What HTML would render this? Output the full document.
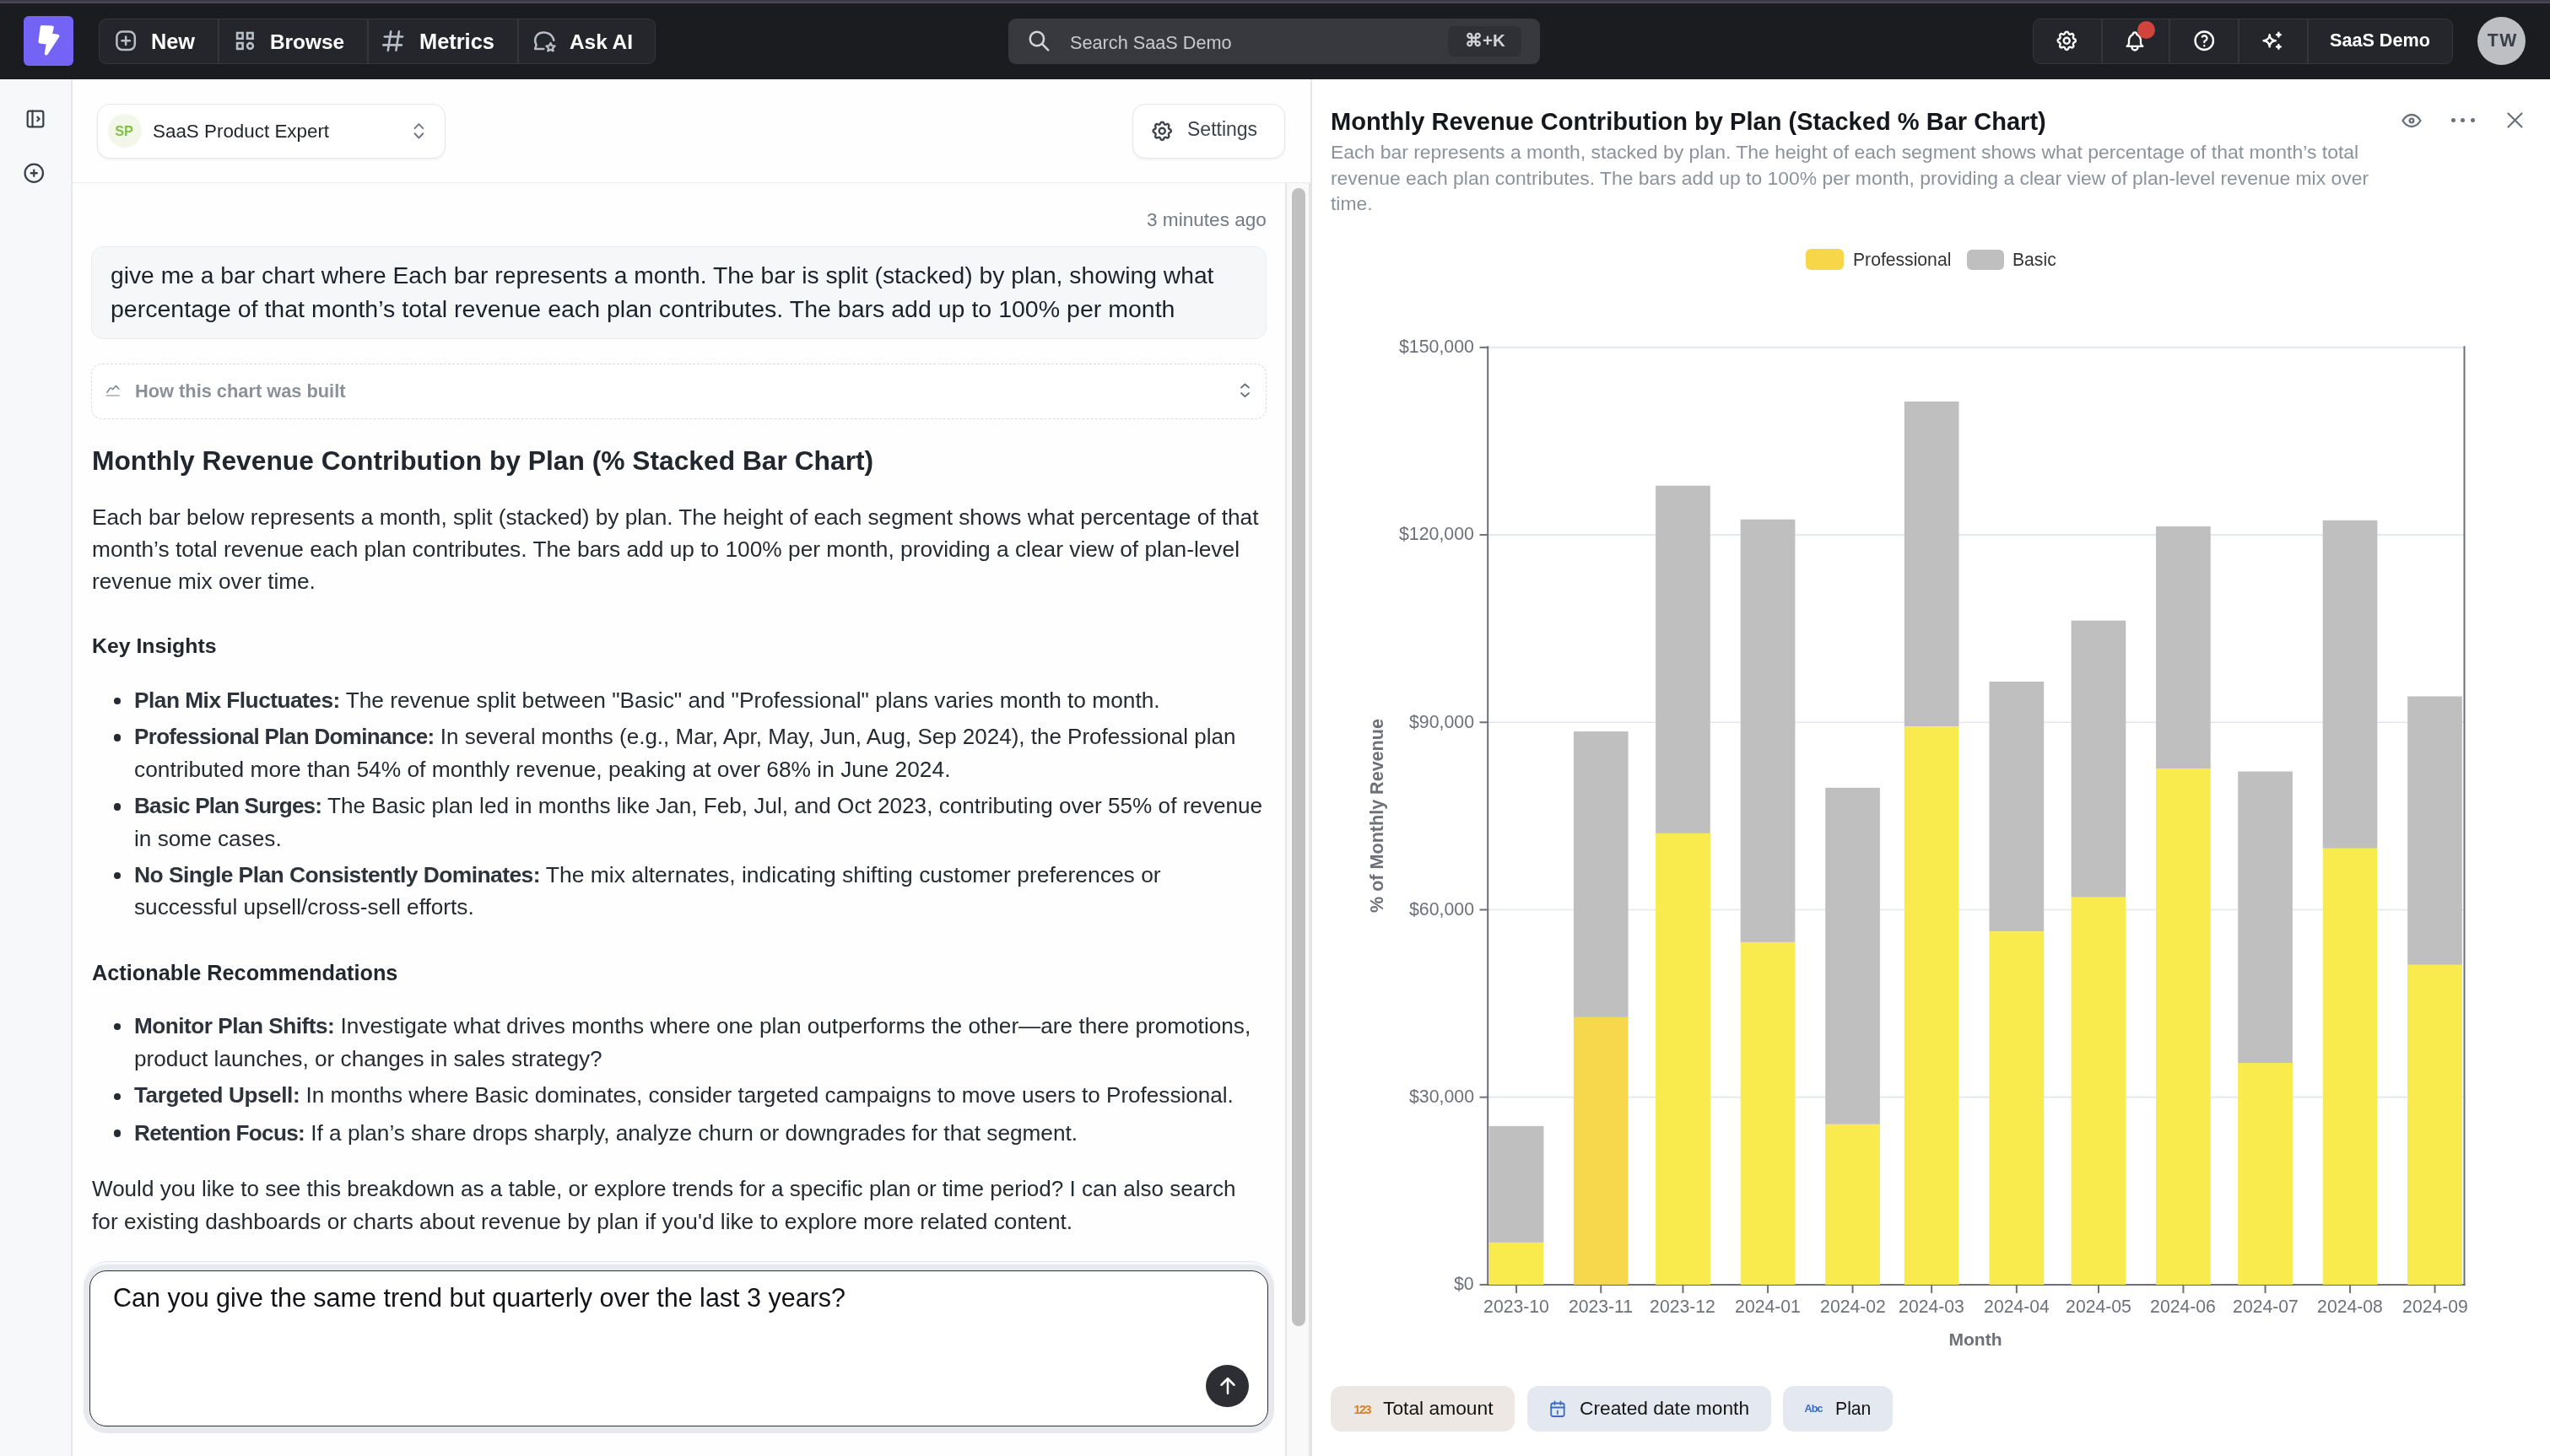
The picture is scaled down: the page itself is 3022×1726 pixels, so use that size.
<!DOCTYPE html>
<html><head><meta charset="utf-8"><title>SaaS Demo</title>
<style>
html,body{margin:0;padding:0;}
body{width:3022px;height:1726px;position:relative;overflow:hidden;background:#fff;font-family:"Liberation Sans",sans-serif;}
.t{position:absolute;white-space:nowrap;will-change:transform;}
b{font-weight:700;letter-spacing:-0.6px;color:#2e323a;}
</style></head><body>
<div style="position:absolute;left:0px;top:0px;width:3022px;height:2px;background:#3d384b"></div>
<div style="position:absolute;left:0px;top:2px;width:3022px;height:2px;background:#4a484f"></div>
<div style="position:absolute;left:0px;top:4px;width:3022px;height:90px;background:#1b1c1f"></div>
<div style="position:absolute;left:28px;top:19px;width:59px;height:59px;background:#7364f5;border-radius:6px"></div>
<svg style="position:absolute;left:28px;top:19px;" width="59" height="59" viewBox="28 19 59 59" fill="none" stroke-linecap="round" stroke-linejoin="round"><path d="M49.7 32 L61.8 32.4 L59.7 41.6 L68.4 42.7 L54.8 63.5 L57 50.7 L47.5 49.4 Z" fill="#fff" stroke="#fff" stroke-width="4"/></svg>
<div style="position:absolute;left:117px;top:22px;width:660px;height:54px;background:#25262b;border:1.5px solid #35363b;border-radius:9px;box-sizing:border-box"></div>
<div style="position:absolute;left:257.5px;top:23px;width:2.0px;height:52px;background:#35363b"></div>
<div style="position:absolute;left:434.5px;top:23px;width:2.0px;height:52px;background:#35363b"></div>
<div style="position:absolute;left:612.5px;top:23px;width:2.0px;height:52px;background:#35363b"></div>
<svg style="position:absolute;left:130px;top:30px;" width="40" height="36" viewBox="130 30 40 36" fill="none" stroke-linecap="round" stroke-linejoin="round"><rect x="138.4" y="37.5" width="21.4" height="21.4" rx="6.5" stroke="#b8bdc6" stroke-width="2.5"/><path d="M144.4 48.2 H153.9 M149.15 43.5 V53" stroke="#b8bdc6" stroke-width="2.5"/></svg>
<div class="t " style="left:179.00px;top:33.08px;font-size:25.3px;line-height:32.89px;color:#fff;font-weight:700;">New</div>
<svg style="position:absolute;left:272px;top:30px;" width="38" height="36" viewBox="272 30 38 36" fill="none" stroke-linecap="round" stroke-linejoin="round"><rect x="281.1" y="39" width="6.5" height="6.8" stroke="#b8bdc6" stroke-width="2.6" stroke-linejoin="miter"/><rect x="293.1" y="39" width="6.5" height="6.8" stroke="#b8bdc6" stroke-width="2.6" stroke-linejoin="miter"/><rect x="281.1" y="51.1" width="6.5" height="6.8" stroke="#b8bdc6" stroke-width="2.6" stroke-linejoin="miter"/><circle cx="296.5" cy="54.5" r="3.4" stroke="#b8bdc6" stroke-width="2.6"/></svg>
<div class="t " style="left:320.00px;top:33.98px;font-size:24.4px;line-height:31.72px;color:#fff;font-weight:700;">Browse</div>
<svg style="position:absolute;left:448px;top:30px;" width="37" height="36" viewBox="448 30 37 36" fill="none" stroke-linecap="round" stroke-linejoin="round"><path d="M455.8 43.5 H477.1 M454.3 53.4 H475.9 M463.2 37.2 L459.8 59.9 M472.9 37.2 L469.4 59.7" stroke="#b8bdc6" stroke-width="2.6"/></svg>
<div class="t " style="left:497.00px;top:32.98px;font-size:25.4px;line-height:33.02px;color:#fff;font-weight:700;">Metrics</div>
<svg style="position:absolute;left:626px;top:30px;" width="40" height="38" viewBox="626 30 40 38" fill="none" stroke-linecap="round" stroke-linejoin="round"><path d="M644.3 57.9 H634.2 L635.6 53.2 C632.3 47 635 40.3 641.6 38.8 C647.6 37.4 654.4 40.3 656.3 47.8" stroke="#b8bdc6" stroke-width="2.5"/><path d="M652.5 50.9 L654.1 54.2 L657.6 54.6 L655 57 L655.7 60.5 L652.5 58.7 L649.3 60.5 L650 57 L647.4 54.6 L650.9 54.2 Z" stroke="#b8bdc6" stroke-width="2.2"/></svg>
<div class="t " style="left:675.00px;top:33.98px;font-size:24.4px;line-height:31.72px;color:#fff;font-weight:700;">Ask AI</div>
<div style="position:absolute;left:1195px;top:22px;width:630px;height:54px;background:#38393e;border-radius:9px"></div>
<svg style="position:absolute;left:1210px;top:30px;" width="42" height="38" viewBox="1210 30 42 38" fill="none" stroke-linecap="round" stroke-linejoin="round"><circle cx="1228.9" cy="46" r="8.2" stroke="#d4d5d8" stroke-width="2.5"/><path d="M1235.3 52.3 L1242.2 59.3" stroke="#d4d5d8" stroke-width="2.5"/></svg>
<div class="t " style="left:1268.00px;top:36.77px;font-size:21.7px;line-height:28.21px;color:#c9cacd;font-weight:400;">Search SaaS Demo</div>
<div style="position:absolute;left:1716px;top:31px;width:87px;height:35.5px;background:#2f3035;border-radius:7px"></div>
<div class="t " style="left:759.80px;width:2000px;text-align:center;top:34.57px;font-size:20.5px;line-height:26.65px;color:#d2d3d6;font-weight:700;">&#8984;+K</div>
<div style="position:absolute;left:2409px;top:22px;width:498px;height:54px;background:#25262b;border:1.5px solid #35363b;border-radius:9px;box-sizing:border-box"></div>
<div style="position:absolute;left:2489.5px;top:23px;width:2.0px;height:52px;background:#35363b"></div>
<div style="position:absolute;left:2569.8px;top:23px;width:2.0px;height:52px;background:#35363b"></div>
<div style="position:absolute;left:2652px;top:23px;width:2px;height:52px;background:#35363b"></div>
<div style="position:absolute;left:2733.5px;top:23px;width:2.0px;height:52px;background:#35363b"></div>
<svg style="position:absolute;left:2434.85px;top:33.75px;" width="28.5" height="28.5" viewBox="0 0 24 24" fill="none" stroke="#ffffff" stroke-width="2" stroke-linecap="round" stroke-linejoin="round"><path d="M10.325 4.317c.426 -1.756 2.924 -1.756 3.35 0a1.724 1.724 0 0 0 2.573 1.066c1.543 -.94 3.31 .826 2.37 2.37a1.724 1.724 0 0 0 1.065 2.572c1.756 .426 1.756 2.924 0 3.35a1.724 1.724 0 0 0 -1.066 2.573c.94 1.543 -.826 3.31 -2.37 2.37a1.724 1.724 0 0 0 -2.572 1.065c-.426 1.756 -2.924 1.756 -3.35 0a1.724 1.724 0 0 0 -2.573 -1.066c-1.543 .94 -3.31 -.826 -2.37 -2.37a1.724 1.724 0 0 0 -1.065 -2.572c-1.756 -.426 -1.756 -2.924 0 -3.35a1.724 1.724 0 0 0 1.066 -2.573c-.94 -1.543 .826 -3.31 2.37 -2.37c1 .608 2.296 .07 2.572 -1.065z"/><path d="M9 12a3 3 0 1 0 6 0a3 3 0 0 0 -6 0"/></svg>
<svg style="position:absolute;left:2516.40px;top:34.50px;" width="28" height="28" viewBox="0 0 24 24" fill="none" stroke="#ffffff" stroke-width="2" stroke-linecap="round" stroke-linejoin="round"><path d="M10 5a2 2 0 1 1 4 0a7 7 0 0 1 4 6v3a4 4 0 0 0 2 3h-16a4 4 0 0 0 2 -3v-3a7 7 0 0 1 4 -6"/><path d="M9 17v1a3 3 0 0 0 6 0v-1"/></svg>
<div style="position:absolute;left:2532.7px;top:24.9px;width:21.2px;height:21.2px;border-radius:50%;background:#d0443d"></div>
<svg style="position:absolute;left:2598.05px;top:33.95px;" width="28.5" height="28.5" viewBox="0 0 24 24" fill="none" stroke="#ffffff" stroke-width="2" stroke-linecap="round" stroke-linejoin="round"><path d="M3 12a9 9 0 1 0 18 0a9 9 0 1 0 -18 0"/><path d="M12 17v.01"/><path d="M12 13.5a1.5 1.5 0 0 1 1 -1.5a2.6 2.6 0 1 0 -3 -4"/></svg>
<svg style="position:absolute;left:2679.05px;top:33.95px;" width="28.5" height="28.5" viewBox="0 0 24 24" fill="none" stroke="#ffffff" stroke-width="2" stroke-linecap="round" stroke-linejoin="round"><path d="M16 18a2 2 0 0 1 2 2a2 2 0 0 1 2 -2a2 2 0 0 1 -2 -2a2 2 0 0 1 -2 2zm0 -12a2 2 0 0 1 2 2a2 2 0 0 1 2 -2a2 2 0 0 1 -2 -2a2 2 0 0 1 -2 2zm-7 12a6 6 0 0 1 6 -6a6 6 0 0 1 -6 -6a6 6 0 0 1 -6 6a6 6 0 0 1 6 6z"/></svg>
<div class="t " style="left:2761.00px;top:34.47px;font-size:21.6px;line-height:28.08px;color:#fff;font-weight:700;">SaaS Demo</div>
<div style="position:absolute;left:2936.3px;top:19.9px;width:57px;height:57px;border-radius:50%;background:#bdbfc3"></div>
<div class="t " style="left:1965.20px;width:2000px;text-align:center;top:34.67px;font-size:21.3px;line-height:27.69px;color:#3a3e46;font-weight:700;letter-spacing:1.6px;text-indent:1.6px">TW</div>
<div style="position:absolute;left:0px;top:94px;width:84px;height:1632px;background:#f7f8fa"></div>
<div style="position:absolute;left:84px;top:94px;width:1.5px;height:1632px;background:#e6e8eb"></div>
<svg style="position:absolute;left:27.90px;top:126.50px;" width="28" height="28" viewBox="0 0 24 24" fill="none" stroke="#3b4048" stroke-width="1.9" stroke-linecap="round" stroke-linejoin="round"><path d="M4 4m0 2a2 2 0 0 1 2 -2h12a2 2 0 0 1 2 2v12a2 2 0 0 1 -2 2h-12a2 2 0 0 1 -2 -2z"/><path d="M9 4v16"/><path d="M14 10l2 2l-2 2"/></svg>
<svg style="position:absolute;left:25.95px;top:191.05px;" width="28.5" height="28.5" viewBox="0 0 24 24" fill="none" stroke="#3b4048" stroke-width="1.9" stroke-linecap="round" stroke-linejoin="round"><path d="M3 12a9 9 0 1 0 18 0a9 9 0 0 0 -18 0"/><path d="M9 12h6"/><path d="M12 9v6"/></svg>
<div style="position:absolute;left:85.5px;top:94px;width:1467.5px;height:1632px;background:#fefefe"></div>
<div style="position:absolute;left:85.5px;top:216px;width:1466.5px;height:1px;background:#e9ebee"></div>
<div style="position:absolute;left:115.3px;top:123.4px;width:412.8px;height:64.6px;background:#fff;border:1.5px solid #e4e6ea;border-radius:15px;box-sizing:border-box;box-shadow:0 2px 3px rgba(0,0,0,0.05)"></div>
<div style="position:absolute;left:128px;top:135px;width:40px;height:40px;border-radius:50%;background:#f2f7ea"></div>
<div class="t " style="left:-853.20px;width:2000px;text-align:center;top:145.05px;font-size:16.3px;line-height:21.19px;color:#7ec243;font-weight:700;">SP</div>
<div class="t " style="left:181.40px;top:140.77px;font-size:22.4px;line-height:29.12px;color:#1f2328;font-weight:400;">SaaS Product Expert</div>
<svg style="position:absolute;left:484px;top:140px;" width="24" height="30" viewBox="484 140 24 30" fill="none" stroke-linecap="round" stroke-linejoin="round"><path d="M491.5 152.1 L496.4 147.1 L501.3 152.1 M501.3 158.3 L496.4 163.5 L491.5 158.3" stroke="#737983" stroke-width="2"/></svg>
<div style="position:absolute;left:1341.5px;top:123.3px;width:181.70000000000005px;height:64.7px;background:#fff;border:1.5px solid #e4e6ea;border-radius:15px;box-sizing:border-box;box-shadow:0 2px 3px rgba(0,0,0,0.05)"></div>
<svg style="position:absolute;left:1363.25px;top:141.05px;" width="28.5" height="28.5" viewBox="0 0 24 24" fill="none" stroke="#3c4149" stroke-width="2" stroke-linecap="round" stroke-linejoin="round"><path d="M10.325 4.317c.426 -1.756 2.924 -1.756 3.35 0a1.724 1.724 0 0 0 2.573 1.066c1.543 -.94 3.31 .826 2.37 2.37a1.724 1.724 0 0 0 1.065 2.572c1.756 .426 1.756 2.924 0 3.35a1.724 1.724 0 0 0 -1.066 2.573c.94 1.543 -.826 3.31 -2.37 2.37a1.724 1.724 0 0 0 -2.572 1.065c-.426 1.756 -2.924 1.756 -3.35 0a1.724 1.724 0 0 0 -2.573 -1.066c-1.543 .94 -3.31 -.826 -2.37 -2.37a1.724 1.724 0 0 0 -1.065 -2.572c-1.756 -.426 -1.756 -2.924 0 -3.35a1.724 1.724 0 0 0 1.066 -2.573c-.94 -1.543 .826 -3.31 2.37 -2.37c1 .608 2.296 .07 2.572 -1.065z"/><path d="M9 12a3 3 0 1 0 6 0a3 3 0 0 0 -6 0"/></svg>
<div class="t " style="left:1407.00px;top:139.18px;font-size:23px;line-height:29.9px;color:#3d434b;font-weight:400;">Settings</div>
<div style="position:absolute;left:1523px;top:217px;width:2px;height:1509px;background:#e6e6e6"></div>
<div style="position:absolute;left:1525px;top:217px;width:26px;height:1509px;background:#f9f9f9"></div>
<div style="position:absolute;left:1531px;top:223px;width:16px;height:1349px;background:#c0c0c0;border-radius:8px"></div>
<div style="position:absolute;left:1551px;top:217px;width:4px;height:1509px;background:#e5e5e8"></div>
<div style="position:absolute;left:1553px;top:94px;width:2px;height:123px;background:#e4e5e9"></div>
<div class="t " style="right:1521.20px;top:246.47px;font-size:22.6px;line-height:29.38px;color:#737a84;font-weight:400;">3 minutes ago</div>
<div style="position:absolute;left:108px;top:291.7px;width:1393.4px;height:110.30000000000001px;background:#f6f7f9;border:1.5px solid #eaecef;border-radius:14px;box-sizing:border-box"></div>
<div class="t " style="left:131.20px;top:308.33px;font-size:28.26px;line-height:36.74px;color:#1d2129;font-weight:400;">give me a bar chart where Each bar represents a month. The bar is split (stacked) by plan, showing what</div>
<div class="t " style="left:131.20px;top:348.46px;font-size:28.54px;line-height:37.1px;color:#1d2129;font-weight:400;">percentage of that month&#8217;s total revenue each plan contributes. The bars add up to 100% per month</div>
<div style="position:absolute;left:108px;top:431px;width:1393.4px;height:66px;background:#fff;border:1.5px dashed #d8dbe0;border-radius:13px;box-sizing:border-box"></div>
<svg style="position:absolute;left:120px;top:450px;" width="28" height="26" viewBox="120 450 28 26" fill="none" stroke-linecap="round" stroke-linejoin="round"><path d="M126.8 465.2 L130.4 460.2 Q131.5 459.5 133.7 461.4 L137.5 457.3 L140.8 461.1" stroke="#80868f" stroke-width="1.5"/><path d="M126.5 468.9 H141.2" stroke="#b3b7be" stroke-width="1.8"/></svg>
<div class="t " style="left:159.60px;top:449.87px;font-size:21.8px;line-height:28.34px;color:#8b9099;font-weight:700;">How this chart was built</div>
<svg style="position:absolute;left:1464px;top:450px;" width="24" height="26" viewBox="1464 450 24 26" fill="none" stroke-linecap="round" stroke-linejoin="round"><path d="M1471 459.5 L1475.5 455.5 L1480 459.5 M1480 466 L1475.5 470 L1471 466" stroke="#6b717a" stroke-width="1.8"/></svg>
<div class="t " style="left:109.00px;top:526.26px;font-size:31.75px;line-height:41.27px;color:#22262d;font-weight:700;">Monthly Revenue Contribution by Plan (% Stacked Bar Chart)</div>
<div class="t " style="left:109.00px;top:596.09px;font-size:26.2px;line-height:34.06px;color:#262a31;font-weight:400;">Each bar below represents a month, split (stacked) by plan. The height of each segment shows what percentage of that</div>
<div class="t " style="left:109.00px;top:634.19px;font-size:26.3px;line-height:34.19px;color:#262a31;font-weight:400;">month&#8217;s total revenue each plan contributes. The bars add up to 100% per month, providing a clear view of plan-level</div>
<div class="t " style="left:109.00px;top:672.39px;font-size:26.2px;line-height:34.06px;color:#262a31;font-weight:400;">revenue mix over time.</div>
<div class="t " style="left:109.00px;top:750.28px;font-size:24.8px;line-height:32.24px;color:#22262d;font-weight:700;">Key Insights</div>
<div style="position:absolute;left:134.50px;top:826.80px;width:8.4px;height:8.4px;border-radius:50%;background:#262a31"></div>
<div class="t " style="left:159.00px;top:813.10px;font-size:26.29px;line-height:34.18px;color:#262a31;font-weight:400;"><b style="letter-spacing:-0.515px">Plan Mix Fluctuates:</b> The revenue split between "Basic" and "Professional" plans varies month to month.</div>
<div style="position:absolute;left:134.50px;top:870.20px;width:8.4px;height:8.4px;border-radius:50%;background:#262a31"></div>
<div class="t " style="left:159.00px;top:856.79px;font-size:25.99px;line-height:33.79px;color:#262a31;font-weight:400;"><b style="letter-spacing:-0.659px">Professional Plan Dominance:</b> In several months (e.g., Mar, Apr, May, Jun, Aug, Sep 2024), the Professional plan</div>
<div class="t " style="left:159.00px;top:894.66px;font-size:26.33px;line-height:34.23px;color:#262a31;font-weight:400;">contributed more than 54% of monthly revenue, peaking at over 68% in June 2024.</div>
<div style="position:absolute;left:134.50px;top:952.40px;width:8.4px;height:8.4px;border-radius:50%;background:#262a31"></div>
<div class="t " style="left:159.00px;top:938.86px;font-size:26.13px;line-height:33.97px;color:#262a31;font-weight:400;"><b style="letter-spacing:-0.802px">Basic Plan Surges:</b> The Basic plan led in months like Jan, Feb, Jul, and Oct 2023, contributing over 55% of revenue</div>
<div class="t " style="left:159.00px;top:976.89px;font-size:26.2px;line-height:34.06px;color:#262a31;font-weight:400;">in some cases.</div>
<div style="position:absolute;left:134.50px;top:1033.70px;width:8.4px;height:8.4px;border-radius:50%;background:#262a31"></div>
<div class="t " style="left:159.00px;top:1019.85px;font-size:26.44px;line-height:34.37px;color:#262a31;font-weight:400;"><b style="letter-spacing:-0.564px">No Single Plan Consistently Dominates:</b> The mix alternates, indicating shifting customer preferences or</div>
<div class="t " style="left:159.00px;top:1058.19px;font-size:26.2px;line-height:34.06px;color:#262a31;font-weight:400;">successful upsell/cross-sell efforts.</div>
<div class="t " style="left:109.00px;top:1136.79px;font-size:25.29px;line-height:32.88px;color:#22262d;font-weight:700;">Actionable Recommendations</div>
<div style="position:absolute;left:134.50px;top:1213.10px;width:8.4px;height:8.4px;border-radius:50%;background:#262a31"></div>
<div class="t " style="left:159.00px;top:1199.49px;font-size:26.19px;line-height:34.05px;color:#262a31;font-weight:400;"><b style="letter-spacing:-0.501px">Monitor Plan Shifts:</b> Investigate what drives months where one plan outperforms the other&#8212;are there promotions,</div>
<div class="t " style="left:159.00px;top:1237.59px;font-size:26.2px;line-height:34.06px;color:#262a31;font-weight:400;">product launches, or changes in sales strategy?</div>
<div style="position:absolute;left:134.50px;top:1295.70px;width:8.4px;height:8.4px;border-radius:50%;background:#262a31"></div>
<div class="t " style="left:159.00px;top:1282.19px;font-size:26.1px;line-height:33.93px;color:#262a31;font-weight:400;"><b style="letter-spacing:-0.395px">Targeted Upsell:</b> In months where Basic dominates, consider targeted campaigns to move users to Professional.</div>
<div style="position:absolute;left:134.50px;top:1339.20px;width:8.4px;height:8.4px;border-radius:50%;background:#262a31"></div>
<div class="t " style="left:159.00px;top:1325.59px;font-size:26.2px;line-height:34.06px;color:#262a31;font-weight:400;"><b style="letter-spacing:-0.746px">Retention Focus:</b> If a plan&#8217;s share drops sharply, analyze churn or downgrades for that segment.</div>
<div class="t " style="left:109.00px;top:1392.52px;font-size:26.07px;line-height:33.89px;color:#262a31;font-weight:400;">Would you like to see this breakdown as a table, or explore trends for a specific plan or time period? I can also search</div>
<div class="t " style="left:109.00px;top:1430.53px;font-size:26.26px;line-height:34.14px;color:#262a31;font-weight:400;">for existing dashboards or charts about revenue by plan if you'd like to explore more related content.</div>
<div style="position:absolute;left:99px;top:1495px;width:1410.5px;height:204px;background:#f8f9fe;border-top:1px solid #dfe6fb;box-sizing:border-box;border-radius:28px"></div>
<div style="position:absolute;left:99px;top:1499px;width:1410.5px;height:200px;background:#e8e9ec;border-radius:27px"></div>
<div style="position:absolute;left:106.2px;top:1506.2px;width:1396.8px;height:185.29999999999995px;background:#fff;border:1.5px solid #2c2f36;border-radius:20px;box-sizing:border-box"></div>
<div class="t " style="left:133.70px;top:1519.20px;font-size:30.5px;line-height:39.65px;color:#111318;font-weight:400;">Can you give the same trend but quarterly over the last 3 years?</div>
<div style="position:absolute;left:1429.4px;top:1617.5px;width:50.5px;height:50.5px;border-radius:50%;background:#2d2e33"></div>
<svg style="position:absolute;left:1439.70px;top:1627.80px;" width="30" height="30" viewBox="0 0 24 24" fill="none" stroke="#fff" stroke-width="2" stroke-linecap="round" stroke-linejoin="round"><path d="M12 5l0 14"/><path d="M18 11l-6 -6"/><path d="M6 11l6 -6"/></svg>
<div style="position:absolute;left:1555px;top:94px;width:1467px;height:1632px;background:#ffffff"></div>
<div class="t " style="left:1577.00px;top:126.03px;font-size:29.07px;line-height:37.79px;color:#15171c;font-weight:700;">Monthly Revenue Contribution by Plan (Stacked % Bar Chart)</div>
<div class="t " style="left:1577.00px;top:165.24px;font-size:22.95px;line-height:30px;color:#8c929b;font-weight:400;">Each bar represents a month, stacked by plan. The height of each segment shows what percentage of that month&#8217;s total</div>
<div class="t " style="left:1577.00px;top:195.56px;font-size:22.9px;line-height:30px;color:#8c929b;font-weight:400;">revenue each plan contributes. The bars add up to 100% per month, providing a clear view of plan-level revenue mix over</div>
<div class="t " style="left:1577.00px;top:225.56px;font-size:22.9px;line-height:30px;color:#8c929b;font-weight:400;">time.</div>
<svg style="position:absolute;left:2844.30px;top:128.80px;" width="28" height="28" viewBox="0 0 24 24" fill="none" stroke="#6b717a" stroke-width="2" stroke-linecap="round" stroke-linejoin="round"><path d="M10 12a2 2 0 1 0 4 0a2 2 0 0 0 -4 0"/><path d="M21 12c-2.4 4 -5.4 6 -9 6c-3.6 0 -6.6 -2 -9 -6c2.4 -4 5.4 -6 9 -6c3.6 0 6.6 2 9 6"/></svg>
<div style="position:absolute;left:2904.60px;top:140.20px;width:5.2px;height:5.2px;border-radius:50%;background:#6b717a"></div>
<div style="position:absolute;left:2916.20px;top:140.20px;width:5.2px;height:5.2px;border-radius:50%;background:#6b717a"></div>
<div style="position:absolute;left:2927.80px;top:140.20px;width:5.2px;height:5.2px;border-radius:50%;background:#6b717a"></div>
<svg style="position:absolute;left:2965px;top:128px;" width="31" height="30" viewBox="2965 128 31 30" fill="none" stroke-linecap="round" stroke-linejoin="round"><path d="M2972.5 134.5 L2988.5 150.5 M2988.5 134.5 L2972.5 150.5" stroke="#6b717a" stroke-width="2.2"/></svg>
<div style="position:absolute;left:2139.7px;top:295px;width:45.0px;height:25px;background:#f8d64a;border-radius:6px"></div>
<div class="t " style="left:2195.60px;top:294.32px;font-size:21.15px;line-height:27.49px;color:#333;font-weight:400;">Professional</div>
<div style="position:absolute;left:2331px;top:295.5px;width:44.40000000000009px;height:24.19999999999999px;background:#bfbfbf;border-radius:6px"></div>
<div class="t " style="left:2385.30px;top:294.32px;font-size:21.15px;line-height:27.49px;color:#333;font-weight:400;">Basic</div>
<svg style="position:absolute;left:0;top:0" width="3022" height="1726" viewBox="0 0 3022 1726"><line x1="1764" y1="1300.69" x2="2920" y2="1300.69" stroke="#e2e6ef" stroke-width="1.7"/><line x1="1764" y1="1078.48" x2="2920" y2="1078.48" stroke="#e2e6ef" stroke-width="1.7"/><line x1="1764" y1="856.27" x2="2920" y2="856.27" stroke="#e2e6ef" stroke-width="1.7"/><line x1="1764" y1="634.06" x2="2920" y2="634.06" stroke="#e2e6ef" stroke-width="1.7"/><line x1="1764" y1="411.85" x2="2920" y2="411.85" stroke="#e2e6ef" stroke-width="1.7"/><line x1="1762.2" y1="1522.9" x2="2921.5" y2="1522.9" stroke="#6e7079" stroke-width="2"/><rect x="1764.70" y="1334.90" width="64.7" height="138.00" fill="#bfbfbf"/><rect x="1764.70" y="1472.90" width="64.7" height="50.00" fill="#f9ea4e"/><rect x="1864.90" y="867.10" width="64.7" height="338.80" fill="#bfbfbf"/><rect x="1864.90" y="1205.90" width="64.7" height="317.00" fill="#f7d74b"/><rect x="1962.10" y="575.70" width="64.7" height="412.20" fill="#bfbfbf"/><rect x="1962.10" y="987.90" width="64.7" height="535.00" fill="#f9ea4e"/><rect x="2062.70" y="615.70" width="64.7" height="501.20" fill="#bfbfbf"/><rect x="2062.70" y="1116.90" width="64.7" height="406.00" fill="#f9ea4e"/><rect x="2163.20" y="933.80" width="64.7" height="399.00" fill="#bfbfbf"/><rect x="2163.20" y="1332.80" width="64.7" height="190.10" fill="#f9ea4e"/><rect x="2256.80" y="476.00" width="64.7" height="385.30" fill="#bfbfbf"/><rect x="2256.80" y="861.30" width="64.7" height="661.60" fill="#f9ea4e"/><rect x="2357.50" y="808.00" width="64.7" height="296.20" fill="#bfbfbf"/><rect x="2357.50" y="1104.20" width="64.7" height="418.70" fill="#f9ea4e"/><rect x="2454.60" y="735.60" width="64.7" height="328.10" fill="#bfbfbf"/><rect x="2454.60" y="1063.70" width="64.7" height="459.20" fill="#f9ea4e"/><rect x="2555.05" y="624.00" width="64.7" height="287.00" fill="#bfbfbf"/><rect x="2555.05" y="911.00" width="64.7" height="611.90" fill="#f9ea4e"/><rect x="2652.20" y="914.50" width="64.7" height="345.50" fill="#bfbfbf"/><rect x="2652.20" y="1260.00" width="64.7" height="262.90" fill="#f9ea4e"/><rect x="2752.70" y="616.80" width="64.7" height="389.00" fill="#bfbfbf"/><rect x="2752.70" y="1005.80" width="64.7" height="517.10" fill="#f9ea4e"/><rect x="2853.20" y="825.50" width="64.7" height="318.30" fill="#bfbfbf"/><rect x="2853.20" y="1143.80" width="64.7" height="379.10" fill="#f9ea4e"/><line x1="1763.2" y1="410.35" x2="1763.2" y2="1523.9" stroke="#6e7079" stroke-width="2"/><line x1="2920.5" y1="410.35" x2="2920.5" y2="1523.9" stroke="#6e7079" stroke-width="2"/><line x1="1753.5" y1="1522.90" x2="1763.2" y2="1522.90" stroke="#6e7079" stroke-width="2"/><line x1="1753.5" y1="1300.69" x2="1763.2" y2="1300.69" stroke="#6e7079" stroke-width="2"/><line x1="1753.5" y1="1078.48" x2="1763.2" y2="1078.48" stroke="#6e7079" stroke-width="2"/><line x1="1753.5" y1="856.27" x2="1763.2" y2="856.27" stroke="#6e7079" stroke-width="2"/><line x1="1753.5" y1="634.06" x2="1763.2" y2="634.06" stroke="#6e7079" stroke-width="2"/><line x1="1753.5" y1="411.85" x2="1763.2" y2="411.85" stroke="#6e7079" stroke-width="2"/><line x1="1797.05" y1="1522.9" x2="1797.05" y2="1532.9" stroke="#6e7079" stroke-width="2"/><line x1="1897.25" y1="1522.9" x2="1897.25" y2="1532.9" stroke="#6e7079" stroke-width="2"/><line x1="1994.45" y1="1522.9" x2="1994.45" y2="1532.9" stroke="#6e7079" stroke-width="2"/><line x1="2095.05" y1="1522.9" x2="2095.05" y2="1532.9" stroke="#6e7079" stroke-width="2"/><line x1="2195.55" y1="1522.9" x2="2195.55" y2="1532.9" stroke="#6e7079" stroke-width="2"/><line x1="2289.15" y1="1522.9" x2="2289.15" y2="1532.9" stroke="#6e7079" stroke-width="2"/><line x1="2389.85" y1="1522.9" x2="2389.85" y2="1532.9" stroke="#6e7079" stroke-width="2"/><line x1="2486.95" y1="1522.9" x2="2486.95" y2="1532.9" stroke="#6e7079" stroke-width="2"/><line x1="2587.40" y1="1522.9" x2="2587.40" y2="1532.9" stroke="#6e7079" stroke-width="2"/><line x1="2684.55" y1="1522.9" x2="2684.55" y2="1532.9" stroke="#6e7079" stroke-width="2"/><line x1="2785.05" y1="1522.9" x2="2785.05" y2="1532.9" stroke="#6e7079" stroke-width="2"/><line x1="2885.55" y1="1522.9" x2="2885.55" y2="1532.9" stroke="#6e7079" stroke-width="2"/></svg>
<div class="t " style="right:1275.00px;top:1509.17px;font-size:21.3px;line-height:27.69px;color:#6e7079;font-weight:400;">$0</div>
<div class="t " style="right:1275.00px;top:1286.96px;font-size:21.3px;line-height:27.69px;color:#6e7079;font-weight:400;">$30,000</div>
<div class="t " style="right:1275.00px;top:1064.75px;font-size:21.3px;line-height:27.69px;color:#6e7079;font-weight:400;">$60,000</div>
<div class="t " style="right:1275.00px;top:842.54px;font-size:21.3px;line-height:27.69px;color:#6e7079;font-weight:400;">$90,000</div>
<div class="t " style="right:1275.00px;top:620.33px;font-size:21.3px;line-height:27.69px;color:#6e7079;font-weight:400;">$120,000</div>
<div class="t " style="right:1275.00px;top:398.12px;font-size:21.3px;line-height:27.69px;color:#6e7079;font-weight:400;">$150,000</div>
<div class="t " style="left:797.05px;width:2000px;text-align:center;top:1534.87px;font-size:21.2px;line-height:27.56px;color:#6e7079;font-weight:400;">2023-10</div>
<div class="t " style="left:897.25px;width:2000px;text-align:center;top:1534.87px;font-size:21.2px;line-height:27.56px;color:#6e7079;font-weight:400;">2023-11</div>
<div class="t " style="left:994.45px;width:2000px;text-align:center;top:1534.87px;font-size:21.2px;line-height:27.56px;color:#6e7079;font-weight:400;">2023-12</div>
<div class="t " style="left:1095.05px;width:2000px;text-align:center;top:1534.87px;font-size:21.2px;line-height:27.56px;color:#6e7079;font-weight:400;">2024-01</div>
<div class="t " style="left:1195.55px;width:2000px;text-align:center;top:1534.87px;font-size:21.2px;line-height:27.56px;color:#6e7079;font-weight:400;">2024-02</div>
<div class="t " style="left:1289.15px;width:2000px;text-align:center;top:1534.87px;font-size:21.2px;line-height:27.56px;color:#6e7079;font-weight:400;">2024-03</div>
<div class="t " style="left:1389.85px;width:2000px;text-align:center;top:1534.87px;font-size:21.2px;line-height:27.56px;color:#6e7079;font-weight:400;">2024-04</div>
<div class="t " style="left:1486.95px;width:2000px;text-align:center;top:1534.87px;font-size:21.2px;line-height:27.56px;color:#6e7079;font-weight:400;">2024-05</div>
<div class="t " style="left:1587.40px;width:2000px;text-align:center;top:1534.87px;font-size:21.2px;line-height:27.56px;color:#6e7079;font-weight:400;">2024-06</div>
<div class="t " style="left:1684.55px;width:2000px;text-align:center;top:1534.87px;font-size:21.2px;line-height:27.56px;color:#6e7079;font-weight:400;">2024-07</div>
<div class="t " style="left:1785.05px;width:2000px;text-align:center;top:1534.87px;font-size:21.2px;line-height:27.56px;color:#6e7079;font-weight:400;">2024-08</div>
<div class="t " style="left:1885.55px;width:2000px;text-align:center;top:1534.87px;font-size:21.2px;line-height:27.56px;color:#6e7079;font-weight:400;">2024-09</div>
<div class="t " style="left:1341.00px;width:2000px;text-align:center;top:1574.02px;font-size:21.05px;line-height:27.37px;color:#6e7079;font-weight:700;">Month</div>
<div class="t" style="left:1431.5px;top:951.8px;width:400px;height:30px;line-height:30px;text-align:center;font-size:21.56px;font-weight:700;color:#6e7079;transform:rotate(-90deg);transform-origin:200px 15px">% of Monthly Revenue</div>
<div style="position:absolute;left:1577px;top:1643.2px;width:217.70000000000005px;height:53.5px;background:#ede8e3;border-radius:13px"></div>
<div class="t " style="left:613.80px;width:2000px;text-align:center;top:1660.55px;font-size:15px;line-height:19.5px;color:#d9822b;font-weight:700;letter-spacing:-1.9px">123</div>
<div class="t " style="left:1638.80px;top:1654.78px;font-size:22.8px;line-height:29.64px;color:#141414;font-weight:400;">Total amount</div>
<div style="position:absolute;left:1809.8px;top:1643.2px;width:288.79999999999995px;height:53.5px;background:#e4e8f0;border-radius:13px"></div>
<svg style="position:absolute;left:1832px;top:1658px;" width="28" height="26" viewBox="1832 1658 28 26" fill="none" stroke-linecap="round" stroke-linejoin="round"><rect x="1838.2" y="1663.5" width="15.5" height="15.5" rx="2.5" stroke="#3b6cc4" stroke-width="1.8"/><path d="M1838.2 1668.5 H1853.7 M1842.5 1661.5 V1665 M1849.5 1661.5 V1665 M1845.8 1672.5 V1676" stroke="#3b6cc4" stroke-width="1.8"/></svg>
<div class="t " style="left:1871.60px;top:1654.83px;font-size:22.75px;line-height:29.57px;color:#141414;font-weight:400;">Created date month</div>
<div style="position:absolute;left:2113px;top:1643.2px;width:129.69999999999982px;height:53.5px;background:#e4e8f0;border-radius:13px"></div>
<div class="t " style="left:1148.60px;width:2000px;text-align:center;top:1662.24px;font-size:12.6px;line-height:16.38px;color:#3b6cc4;font-weight:700;letter-spacing:-0.9px">Abc</div>
<div class="t " style="left:2175.00px;top:1656.37px;font-size:21.2px;line-height:27.56px;color:#141414;font-weight:400;">Plan</div>
</body></html>
